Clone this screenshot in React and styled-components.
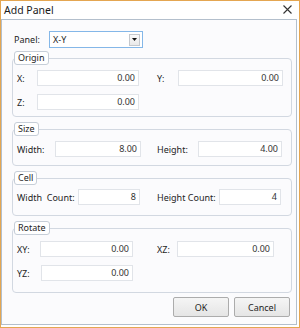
import React from "react";
import styled, { createGlobalStyle } from "styled-components";

const Global = createGlobalStyle`
  html, body { margin: 0; padding: 0; background: #ffffff; }
  * { box-sizing: border-box; }
  body { font-family: "Noto Sans", "Open Sans", sans-serif; }
`;

const Window = styled.div`
  width: 300px;
  height: 328px;
  border: 1px solid #e4a651;
  background: #ffffff;
  display: flex;
  flex-direction: column;
  color: #1e1e1e;
`;

const TitleBar = styled.div`
  height: 18px;
  display: flex;
  align-items: center;
  justify-content: space-between;
  padding: 0 7px 1px 3px;
  font-size: 10.5px;
  color: #1a1a1a;
`;

const Client = styled.div`
  flex: 1;
  margin: 0 2px 2px 0;
  border: 1px solid #b3bfcc;
  background: #fbfbfd;
  padding: 11px 4px 0 10px;
  display: flex;
  flex-direction: column;
`;

const PanelRow = styled.div`
  display: flex;
  align-items: center;
  height: 17px;
  margin-bottom: 3px;
`;

const Label = styled.span`
  font-size: 9px;
  width: ${(p) => p.w}px;
  flex: none;
  white-space: pre;
  padding-left: ${(p) => p.pl || 0}px;
`;

const Select = styled.div`
  width: 94px;
  height: 17px;
  border: 1px solid #84b7e8;
  background: #ffffff;
  display: flex;
  align-items: center;
  justify-content: space-between;
  padding: 0 2px 0 3px;
  font-size: 9px;
`;

const DropButton = styled.div`
  width: 11px;
  height: 12px;
  border: 1px solid #c4c8cd;
  background: linear-gradient(#fafafa, #e9e9e9);
  display: flex;
  align-items: center;
  justify-content: center;
`;

const GroupWrap = styled.div`
  display: flex;
  flex-direction: column;
  margin-top: ${(p) => p.mt || 0}px;
`;

const Legend = styled.div`
  align-self: flex-start;
  margin-left: 2px;
  margin-bottom: -7px;
  height: 14px;
  padding: 0 3px;
  border: 1px solid #c6ced8;
  border-radius: 3px;
  background: #ffffff;
  font-size: 9px;
  line-height: 12px;
  position: relative;
  z-index: 1;
`;

const Box = styled.div`
  border: 1px solid #d2d8e1;
  border-radius: 4px;
  padding: ${(p) => p.pt}px 0 ${(p) => p.pb}px 4px;
  display: flex;
  flex-direction: column;
  gap: 8px;
`;

const Row = styled.div`
  display: grid;
  grid-template-columns: 140px auto;
  align-items: center;
`;

const Field = styled.div`
  display: flex;
  align-items: center;
`;

const Input = styled.div`
  width: ${(p) => p.w}px;
  height: 16px;
  border: 1px solid #e1e4e9;
  background: #ffffff;
  font-size: 9px;
  color: #333333;
  text-align: right;
  padding-right: 3px;
  line-height: 14px;
`;

const Buttons = styled.div`
  display: flex;
  justify-content: flex-end;
  gap: 5px;
  margin: 4px 2px 0 0;
`;

const Button = styled.div`
  width: 56px;
  height: 20px;
  border: 1px solid #acacac;
  border-radius: 2px;
  background: linear-gradient(#f5f5f5, #e5e5e5);
  font-size: 9px;
  display: flex;
  align-items: center;
  justify-content: center;
`;

const CloseIcon = () => (
  <svg width="9" height="9" viewBox="0 0 9 9">
    <path d="M0.5 0.5 L8.5 8.5 M8.5 0.5 L0.5 8.5" stroke="#333" strokeWidth="1.1" />
  </svg>
);

const Arrow = () => (
  <svg width="5" height="3" viewBox="0 0 5 3">
    <path d="M0 0 H5 L2.5 3 Z" fill="#111" />
  </svg>
);

const F = ({ label, lw, iw, value }) => (
  <Field>
    <Label w={lw}>{label}</Label>
    <Input w={iw}>{value}</Input>
  </Field>
);

export default function App() {
  return (
    <>
      <Global />
      <Window>
        <TitleBar>
          <span>Add Panel</span>
          <CloseIcon />
        </TitleBar>
        <Client>
          <PanelRow>
            <Label w={37} pl={2}>Panel:</Label>
            <Select>
              <span>X-Y</span>
              <DropButton>
                <Arrow />
              </DropButton>
            </Select>
          </PanelRow>

          <GroupWrap>
            <Legend>Origin</Legend>
            <Box pt={11} pb={6}>
              <Row>
                <F label="X:" lw={20} iw={102} value="0.00" />
                <F label="Y:" lw={21} iw={105} value="0.00" />
              </Row>
              <Row>
                <F label="Z:" lw={20} iw={102} value="0.00" />
              </Row>
            </Box>
          </GroupWrap>

          <GroupWrap mt={5}>
            <Legend>Size</Legend>
            <Box pt={11} pb={8}>
              <Row>
                <F label="Width:" lw={38} iw={86} value="8.00" />
                <F label="Height:" lw={41} iw={84} value="4.00" />
              </Row>
            </Box>
          </GroupWrap>

          <GroupWrap mt={5}>
            <Legend>Cell</Legend>
            <Box pt={10} pb={10}>
              <Row>
                <F label="Width  Count:" lw={61} iw={62} value="8" />
                <F label="Height Count:" lw={62} iw={62} value="4" />
              </Row>
            </Box>
          </GroupWrap>

          <GroupWrap mt={5}>
            <Legend>Rotate</Legend>
            <Box pt={12} pb={11}>
              <Row>
                <F label="XY:" lw={23} iw={93} value="0.00" />
                <F label="XZ:" lw={20} iw={97} value="0.00" />
              </Row>
              <Row>
                <F label="YZ:" lw={24} iw={92} value="0.00" />
              </Row>
            </Box>
          </GroupWrap>

          <Buttons>
            <Button>OK</Button>
            <Button>Cancel</Button>
          </Buttons>
        </Client>
      </Window>
    </>
  );
}
